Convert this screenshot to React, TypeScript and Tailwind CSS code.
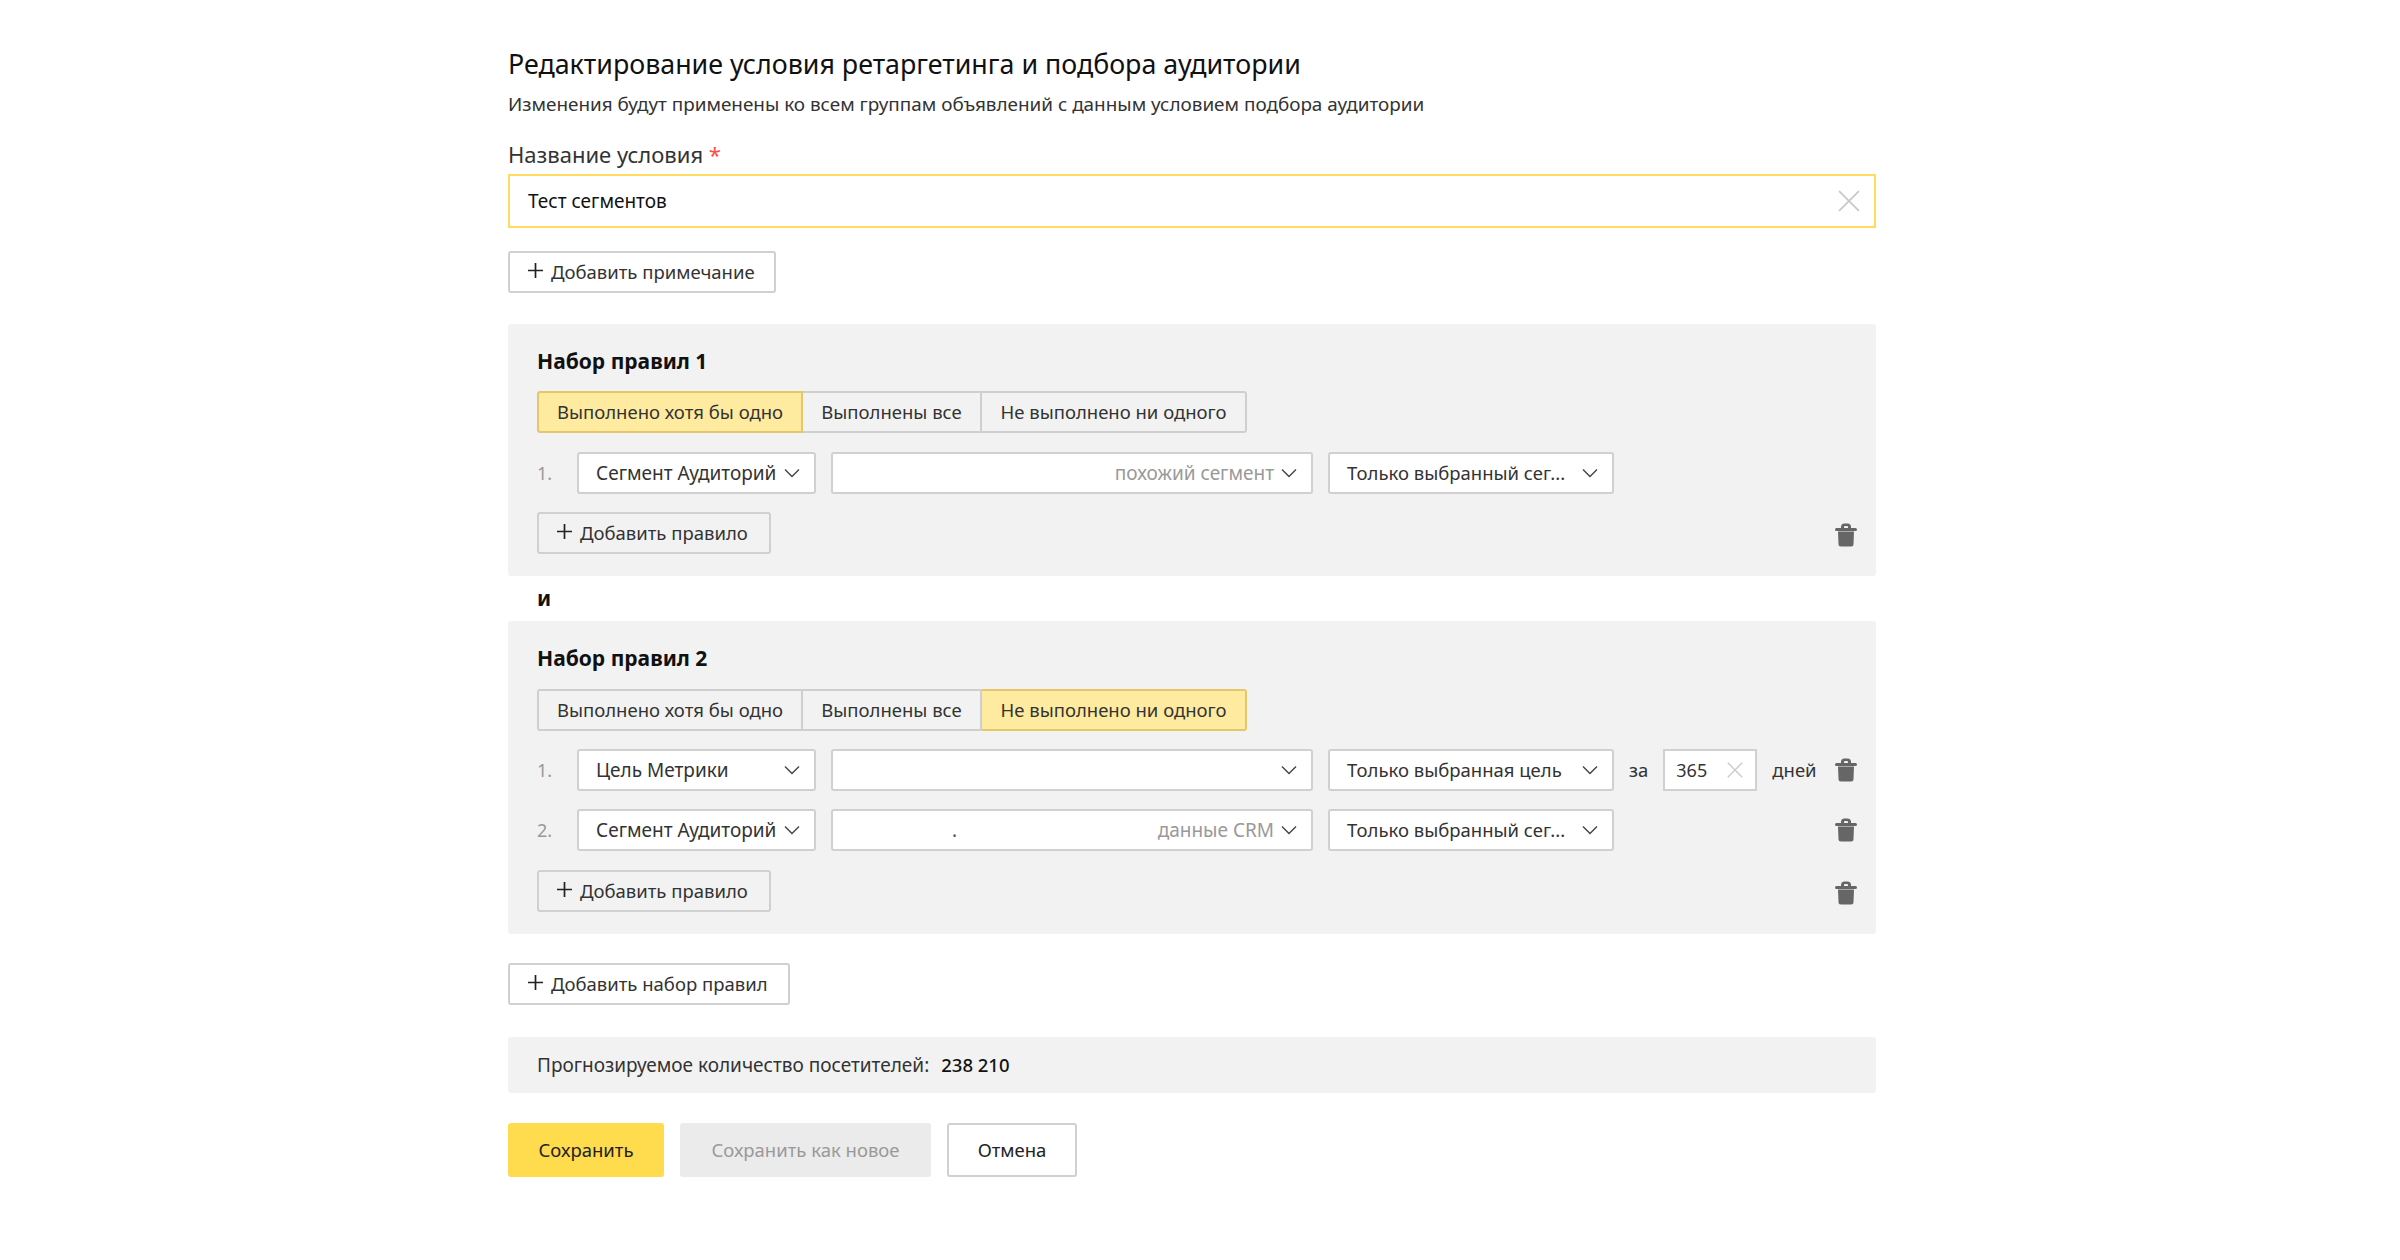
import React from "react";

const Chevron = () => (
  <svg width="16" height="10" viewBox="0 0 16 10" fill="none" className="shrink-0">
    <path d="M1 1.5 8 8.5 15 1.5" stroke="#444" strokeWidth="1.4" />
  </svg>
);

const Cross = ({ size }: { size: number }) => (
  <svg width={size} height={size} viewBox="0 0 20 20" fill="none" className="shrink-0">
    <path d="M1 1 19 19M19 1 1 19" stroke="#c8c8c8" strokeWidth="1.6" />
  </svg>
);

const Plus = () => (
  <svg width="15" height="15" viewBox="0 0 15 15" fill="none" className="mb-[3px] shrink-0">
    <path d="M7.5 0V15M0 7.5H15" stroke="#222" strokeWidth="1.7" />
  </svg>
);

const Trash = () => (
  <svg width="22" height="24" viewBox="0 0 22 24" className="shrink-0">
    <path
      d="M6 5V4a3.500 3.500 0 0 1 3.500-3.500h3A3.500 3.500 0 0 1 16 4v1h4.500a1.500 1.500 0 0 1 0 3h-19a1.500 1.500 0 0 1 0-3ZM9 5h4V4a1 1 0 0 0-1-1h-2a1 1 0 0 0-1 1Z"
      fill="#666"
      fillRule="evenodd"
    />
    <path d="M3 8.500h16L18.500 21a2.500 2.500 0 0 1-2.500 2.500H6A2.500 2.500 0 0 1 3.500 21Z" fill="#666" />
  </svg>
);

const AddButton = ({ label, width, white }: { label: string; width: string; white?: boolean }) => (
  <button
    className={`flex h-[42px] items-center gap-[8px] rounded-[3px] border-2 border-[#d0d0d0] pl-[18px] text-[18.5px] text-[#333] ${width} ${
      white ? "bg-white" : "bg-[#f2f2f2]"
    }`}
  >
    <Plus />
    {label}
  </button>
);

const Select = ({ children, width, size }: { children: React.ReactNode; width: string; size: string }) => (
  <div
    className={`flex h-[42px] shrink-0 items-center justify-between rounded-[3px] border-2 border-[#d0d0d0] bg-white pl-[17px] pr-[14px] text-[#333] ${width} ${size}`}
  >
    {children}
    <Chevron />
  </div>
);

const modes = [
  { label: "Выполнено хотя бы одно", width: "w-[266px]" },
  { label: "Выполнены все", width: "w-[179px]" },
  { label: "Не выполнено ни одного", width: "w-[265px]" },
];

const Modes = ({ active }: { active: number }) => (
  <div className="flex h-[42px] w-[710px]">
    {modes.map((m, i) => (
      <div
        key={m.label}
        className={`flex items-center justify-center border-y-2 border-r-2 text-[18.5px] text-[#333] ${m.width} ${
          i === 0 ? "rounded-l-[3px] border-l-2" : ""
        } ${i === 2 ? "rounded-r-[3px]" : ""} ${
          i === active ? "border-[#e3c76a] bg-[#ffeba0]" : "border-[#cfcfcf] bg-[#f2f2f2]"
        }`}
      >
        {m.label}
      </div>
    ))}
  </div>
);

const Num = ({ n }: { n: number }) => <span className="w-[40px] shrink-0 text-[18px] text-[#999]">{n}.</span>;

const Row = ({
  n,
  type,
  value,
  dot,
  scope,
  trash,
  children,
}: {
  n: number;
  type: string;
  value?: React.ReactNode;
  dot?: boolean;
  scope: string;
  trash?: boolean;
  children?: React.ReactNode;
}) => (
  <div className="flex h-[42px] items-center">
    <Num n={n} />
    <Select width="w-[239px]" size="text-[19px]">
      {type}
    </Select>
    <div className="ml-[15px]">
      <Select width="w-[482px]" size="text-[19px]">
        {dot && <span className="ml-[102px] text-[#555]">.</span>}
        <span className="flex-1 pr-[7px] text-right text-[#999]">{value}</span>
      </Select>
    </div>
    <div className="ml-[15px]">
      <Select width="w-[286px]" size="text-[18.5px]">
        {scope}
      </Select>
    </div>
    {children}
    {trash && (
      <div className="ml-auto">
        <Trash />
      </div>
    )}
  </div>
);

const panelTitle = "text-[21px] font-bold leading-none text-[#111]";

export default function App() {
  return (
    <div className="min-h-[1260px] bg-white font-['Noto_Sans',sans-serif]">
      <div className="ml-[508px] flex w-[1368px] flex-col pt-[50px]">
        <h1 className="text-[26.8px] leading-[28px] text-[#111]">
          Редактирование условия ретаргетинга и подбора аудитории
        </h1>
        <p className="mt-[14px] text-[18.9px] leading-[24px] text-[#333]">
          Изменения будут применены ко всем группам объявлений с данным условием подбора аудитории
        </p>
        <label className="mt-[24px] text-[22px] leading-[28px] text-[#333]">
          Название условия <span className="text-[#ff4d4d]">*</span>
        </label>
        <div className="mt-[6px] flex h-[54px] items-center justify-between border-2 border-[#ffdc60] pl-[18px] pr-[14px] text-[19px] text-[#111]">
          Тест сегментов
          <Cross size={22} />
        </div>
        <div className="mt-[23px]">
          <AddButton label="Добавить примечание" width="w-[268px]" white />
        </div>

        <section className="mt-[31px] flex h-[252px] flex-col rounded-[3px] bg-[#f2f2f2] pl-[29px] pr-[19px] pt-[27px]">
          <h2 className={panelTitle}>Набор правил 1</h2>
          <div className="mt-[19px]">
            <Modes active={0} />
          </div>
          <div className="mt-[19px]">
            <Row n={1} type="Сегмент Аудиторий" value="похожий сегмент" scope="Только выбранный сег..." />
          </div>
          <div className="mt-[18px] flex items-center justify-between">
            <AddButton label="Добавить правило" width="w-[234px]" />
            <div className="mt-[4px]">
              <Trash />
            </div>
          </div>
        </section>

        <div className="flex h-[45px] items-center pl-[29px] text-[21px] font-bold text-[#111]">и</div>

        <section className="flex h-[313px] flex-col rounded-[3px] bg-[#f2f2f2] pl-[29px] pr-[19px] pt-[27px]">
          <h2 className={panelTitle}>Набор правил 2</h2>
          <div className="mt-[20px]">
            <Modes active={2} />
          </div>
          <div className="mt-[18px] flex flex-col gap-[18px]">
            <Row n={1} type="Цель Метрики" scope="Только выбранная цель" trash>
              <span className="ml-[15px] text-[18.5px] text-[#333]">за</span>
              <div className="ml-[15px] flex h-[42px] w-[94px] items-center justify-between border-2 border-[#d0d0d0] bg-white pl-[11px] pr-[12px] text-[18px] text-[#333]">
                365
                <Cross size={16} />
              </div>
              <span className="ml-[15px] text-[18.5px] text-[#333]">дней</span>
            </Row>
            <Row n={2} type="Сегмент Аудиторий" value="данные CRM" dot scope="Только выбранный сег..." trash />
          </div>
          <div className="mt-[19px] flex items-center justify-between">
            <AddButton label="Добавить правило" width="w-[234px]" />
            <div className="mt-[4px]">
              <Trash />
            </div>
          </div>
        </section>

        <div className="mt-[29px]">
          <AddButton label="Добавить набор правил" width="w-[282px]" white />
        </div>

        <div className="mt-[32px] flex h-[56px] items-center gap-[12px] rounded-[3px] bg-[#f2f2f2] pl-[29px] text-[19px] text-[#333]">
          Прогнозируемое количество посетителей:
          <span className="text-[18.5px] font-medium text-[#111]">238 210</span>
        </div>

        <div className="mt-[30px] flex gap-[16px] text-[18.5px]">
          <button className="h-[54px] w-[156px] rounded-[3px] bg-[#ffdb4d] text-[#222]">Сохранить</button>
          <button className="h-[54px] w-[251px] rounded-[3px] bg-[#ebebeb] text-[#999]">Сохранить как новое</button>
          <button className="h-[54px] w-[130px] rounded-[3px] border-2 border-[#d0d0d0] bg-white text-[#222]">Отмена</button>
        </div>
      </div>
    </div>
  );
}
